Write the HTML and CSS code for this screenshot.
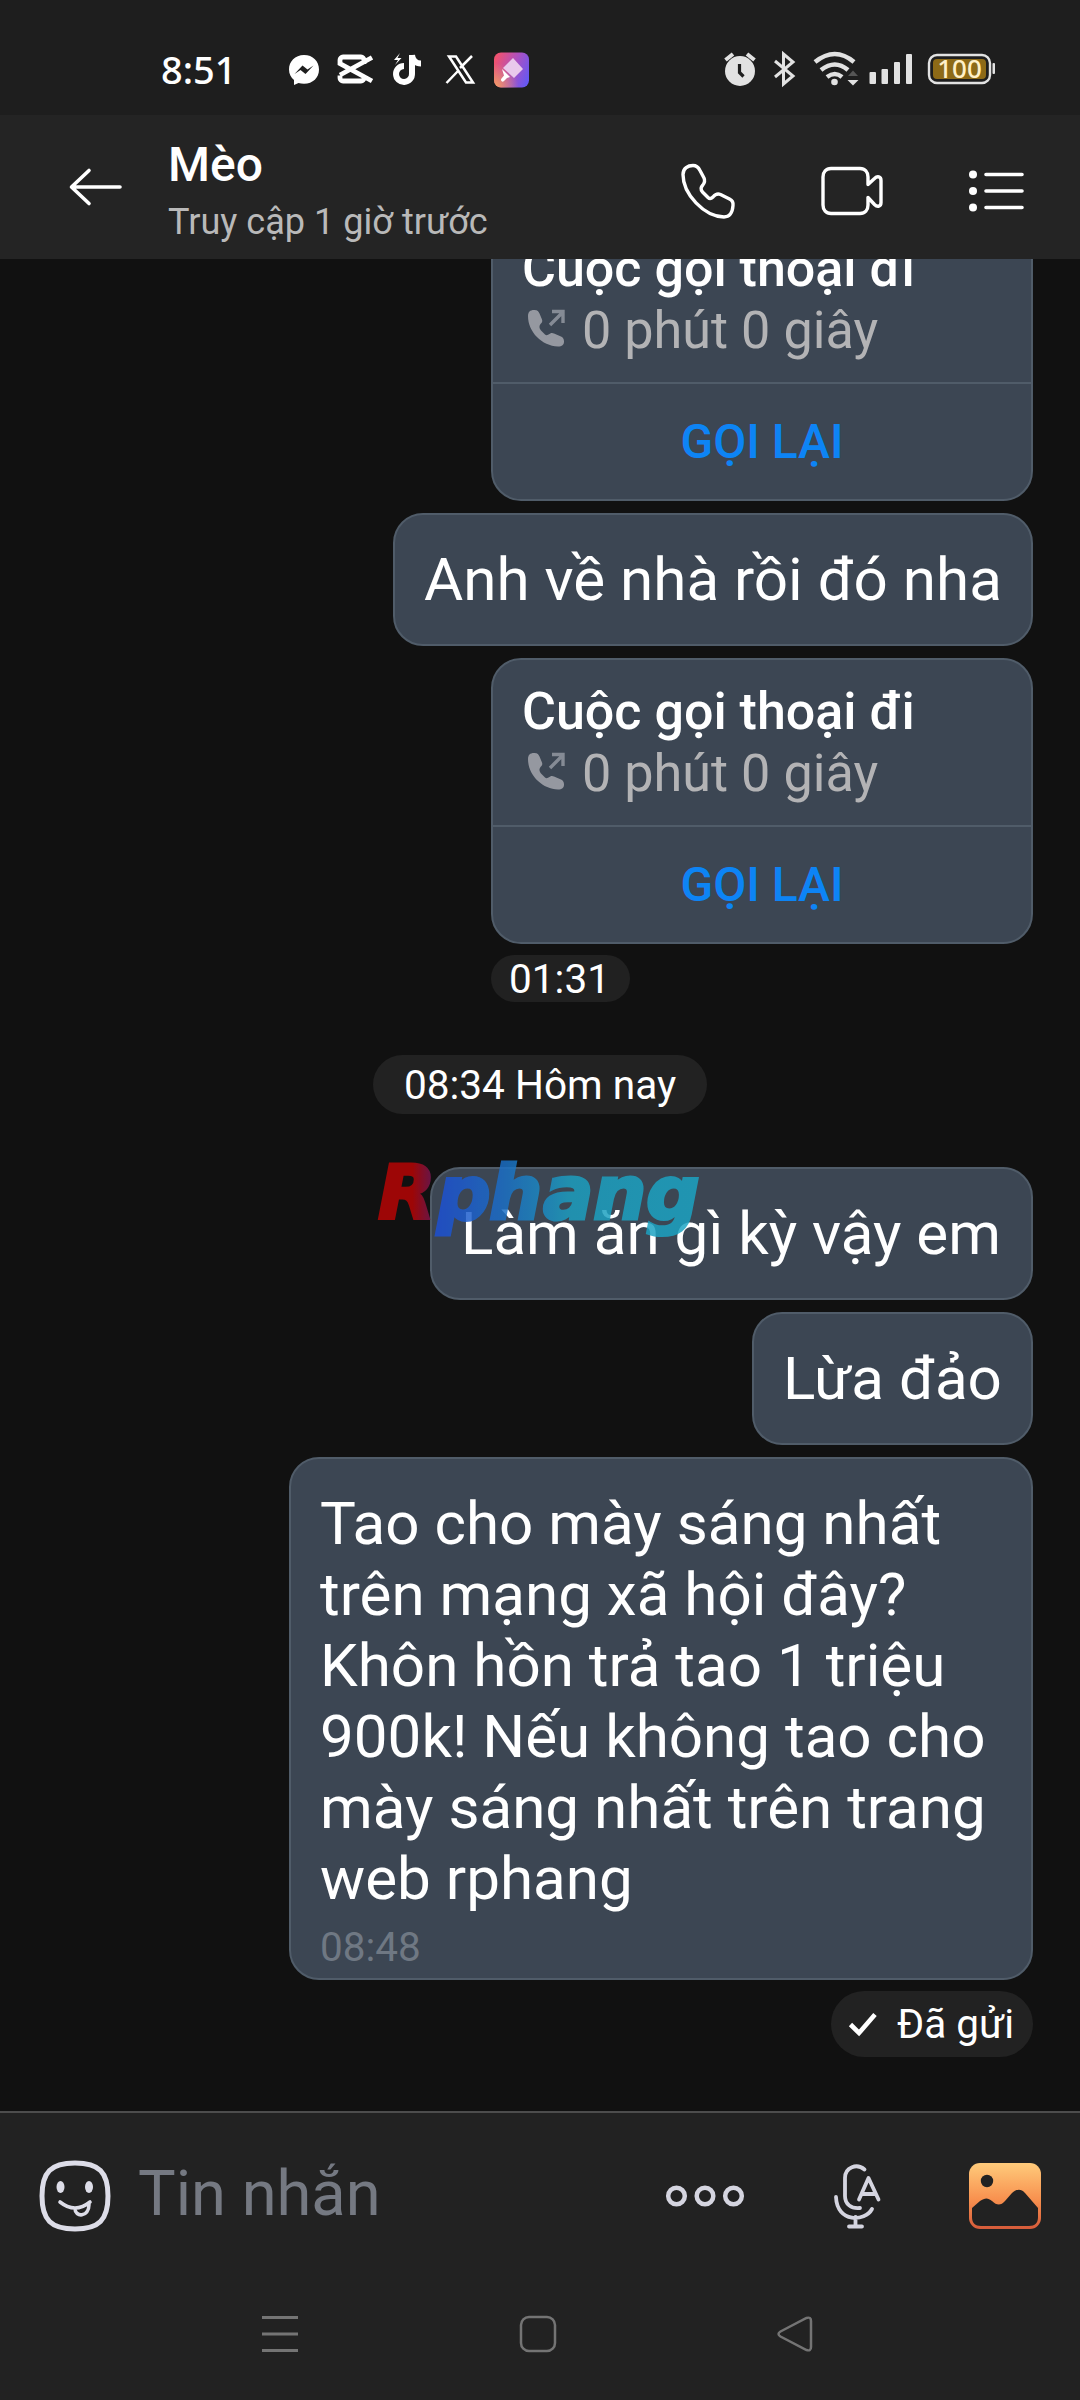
FILE: index.html
```html
<!DOCTYPE html>
<html lang="vi">
<head>
<meta charset="utf-8">
<title>Mèo</title>
<link rel="stylesheet" href="styles.css">
</head>
<body>
<div class="screen">
  <div class="status">
    <span class="clock">8:51</span>
    <svg class="apps" width="242" height="36" viewBox="0 0 242 36">
      <path d="M16 1C7 1 1 7.500 1 15.500c0 4.500 2 8 5 10.500v5l4.500-2c1.700.5 3.500.7 5.500.7 9 0 15-6 15-14.200S25 1 16 1z" fill="#fff"/>
      <path d="M6.500 20l8-8.500 5 4 6-4-8 8.500-5-4z" fill="#1e1e1e"/>
      <path d="M76 10V6a3 3 0 0 0-3-3H55a3 3 0 0 0-3 3v3.500L84 27M52 21.500V24a3 3 0 0 0 3 3h18a3 3 0 0 0 3-3v-2.500M52 21L84 3.500" fill="none" stroke="#fff" stroke-width="4.800"/>
      <path d="M124 1v18.500a8 8 0 1 1-8-7.500M124 1c.5 5 4 8.500 9 8.500" fill="none" stroke="#fff" stroke-width="6"/>
      <path d="M112 -1l-6 7h4l-3 5 6.500-7h-4z" fill="#fff"/>
      <path d="M161 2.500h7L185 28.500h-7zM184 2L172 14M170 17L158.500 29" fill="none" stroke="#fff" stroke-width="2.500"/>
      <defs><linearGradient id="brush" x1="0" y1="0.300" x2="1" y2="0.700"><stop offset="0" stop-color="#f0526f"/><stop offset="0.500" stop-color="#b050bd"/><stop offset="1" stop-color="#6758f2"/></linearGradient>
      <radialGradient id="warm" cx="0" cy="1" r="0.700"><stop offset="0" stop-color="#f6a05f"/><stop offset="1" stop-color="#f6a05f" stop-opacity="0"/></radialGradient></defs>
      <rect x="206" y="-1.500" width="35" height="35" rx="7" fill="url(#brush)"/><rect x="206" y="-1.500" width="35" height="35" rx="7" fill="url(#warm)"/>
      <path d="M225 4l10 11-9 9-11-10z" fill="#e9c9ec"/><path d="M214 15l8 8-3 1-3 3c-2 2-4-1-2.500-2.500l2.500-3z" fill="#fff"/>
    </svg>
    <svg class="sys" width="272" height="40" viewBox="0 0 272 40">
      <circle cx="16" cy="21" r="15" fill="#e2e2e2"/><path d="M15.500 14v8.500l4 4" fill="none" stroke="#1e1e1e" stroke-width="3.200"/>
      <path d="M1.500 10L9 4M30.500 10L23 4" stroke="#e2e2e2" stroke-width="4"/>
      <path d="M51 11l18 15-9.500 8V4L69 12 51 27" fill="none" stroke="#e2e2e2" stroke-width="3"/>
      <path d="M91 12q20-16 39 0M97 20q14-11 27 0M103 27q8-6 15 0" fill="none" stroke="#e2e2e2" stroke-width="4.500"/>
      <circle cx="110.500" cy="32" r="3.300" fill="#e2e2e2"/><path d="M123.500 30h11l-5.500 5.500z" fill="#e2e2e2"/><path d="M124 26h10l-5-5.500z" fill="#555"/>
      <g fill="#e2e2e2"><rect x="145.500" y="22" width="6.500" height="12" rx="1"/><rect x="157.500" y="19" width="6.500" height="15" rx="1"/><rect x="170" y="12" width="6" height="22" rx="1"/><rect x="182" y="4" width="6" height="30" rx="1"/><rect x="268.500" y="13" width="2.500" height="11" rx="1"/></g>
      <rect x="205" y="5" width="61" height="28" rx="8" fill="none" stroke="#e2e2e2" stroke-width="2.400"/><rect x="209" y="9" width="53" height="20" rx="4" fill="#8d6a17"/>
      <text class="level" x="235.500" y="28">100</text>
    </svg>
  </div>

  <header class="header">
    <svg class="back" width="54" height="40" viewBox="0 0 54 40"><path d="M51 20H3M20 3.500L2.500 20 20 36.500" fill="none" stroke="#fff" stroke-width="3.600" stroke-linecap="round" stroke-linejoin="round"/></svg>
    <div class="peer"><div class="name">Mèo</div><div class="seen">Truy cập 1 giờ trước</div></div>
    <div class="actions">
      <svg width="56" height="56" viewBox="0 0 56 56"><path d="M3 11.500C3 5 8 2.500 13 2.500c4 0 5.500 2 7 5l4 7.500c1.500 3 .5 5-1.500 7.500-2 2-2 4 0 6.500l5.500 5.500c1.500 1.500 3 1.500 5-.5 2.500-3 5-3.500 7.500-2.500l9 4.500c3 1.500 4 3 3.500 6.500-.5 7-3 11.500-9 11.500C24 53.500 3 31 3 11.500z" fill="none" stroke="#fff" stroke-width="3.400" stroke-linejoin="round"/></svg>
      <svg width="62" height="50" viewBox="0 0 62 50"><path d="M47 31.500V39c0 5-3 8.500-8 8.500H10c-5 0-8-3.500-8-8.500V11c0-5 3-8.500 8-8.500h29c5 0 8 3.500 8 8.500v7.500l6.500-6c3-3 6.500-2 6.500 2v22c0 4-3.500 5-6.500 2z" fill="none" stroke="#fff" stroke-width="3.400" stroke-linejoin="round"/></svg>
      <svg width="56" height="44" viewBox="0 0 56 44"><g fill="#fff"><circle cx="5" cy="5.500" r="4"/><circle cx="5" cy="22" r="4"/><circle cx="5" cy="38.500" r="4"/></g><path d="M18 5.500h36M18 22h36M18 38.500h36" stroke="#fff" stroke-width="3.600" stroke-linecap="round"/></svg>
    </div>
  </header>

  <main class="chat">
    <section class="call first">
      <div class="call-info"><div class="call-title">Cuộc gọi thoại đi</div>
      <div class="call-sub"><svg width="38" height="40" viewBox="0 0 38 40"><path d="M1 7C1 3 3 1 7 1c3 0 4 .5 5.500 3.500l2.500 6c.7 2 0 3-1.500 4.500-1.500 2-1.500 4 .5 6.500l4 4c1 1 2 1 3.500 0 2-1.500 3.500-2 5.500-1l7 3c2 1 3 2.500 3 5 0 3.500-2 5-6 5C15 37 1 23 1 7z" fill="#9598a0"/><path d="M23 16L35.500 3.500M25 2.500h11V14" fill="none" stroke="#858b95" stroke-width="3.400"/></svg><span>0 phút 0 giây</span></div></div>
      <div class="recall">GỌI LẠI</div>
    </section>
    <div class="bubble home">Anh về nhà rồi đó nha</div>
    <section class="call">
      <div class="call-info"><div class="call-title">Cuộc gọi thoại đi</div>
      <div class="call-sub"><svg width="38" height="40" viewBox="0 0 38 40"><path d="M1 7C1 3 3 1 7 1c3 0 4 .5 5.500 3.500l2.500 6c.7 2 0 3-1.500 4.500-1.500 2-1.500 4 .5 6.500l4 4c1 1 2 1 3.500 0 2-1.500 3.500-2 5.500-1l7 3c2 1 3 2.500 3 5 0 3.500-2 5-6 5C15 37 1 23 1 7z" fill="#9598a0"/><path d="M23 16L35.500 3.500M25 2.500h11V14" fill="none" stroke="#858b95" stroke-width="3.400"/></svg><span>0 phút 0 giây</span></div></div>
      <div class="recall">GỌI LẠI</div>
    </section>
    <div class="time-row"><span class="time">01:31</span></div>
    <div class="date">08:34 Hôm nay</div>
    <div class="branded">
      <div class="bubble work">Làm ăn gì kỳ vậy em</div>
      <svg class="brand" width="340" height="110" viewBox="0 0 340 110">
        <defs>
          <linearGradient id="red" x1="0" x2="1"><stop offset="0.600" stop-color="#b80505"/><stop offset="1" stop-color="#6b1a62"/></linearGradient>
          <linearGradient id="blue" gradientUnits="userSpaceOnUse" x1="66" y1="0" x2="330" y2="0"><stop offset="0" stop-color="#1d50d4"/><stop offset="0.250" stop-color="#1b70c6"/><stop offset="0.500" stop-color="#1c9fc0"/><stop offset="1" stop-color="#1ba5c4"/></linearGradient>
        </defs>
        <text class="logo" x="5" y="79" fill="url(#red)" stroke="url(#red)">R</text>
        <text class="logo" x="64 116 170 220 273" y="79" fill="url(#blue)" stroke="url(#blue)">phang</text>
      </svg>
    </div>
    <div class="bubble scam">Lừa đảo</div>
    <div class="bubble long">Tao cho mày sáng nhất<br>trên mạng xã hội đây?<br>Khôn hồn trả tao 1 triệu<br>900k! Nếu không tao cho<br>mày sáng nhất trên trang<br>web rphang<div class="sent-at">08:48</div></div>
    <div class="sent"><svg width="30" height="26" viewBox="0 0 30 26"><path d="M2.500 13.500l8.500 8.500L27 3.500" fill="none" stroke="#fff" stroke-width="4.600"/></svg><span>Đã gửi</span></div>
  </main>

  <footer class="composer">
    <svg class="smile" width="72" height="72" viewBox="0 0 72 72"><path d="M36 3c24 0 33 9 33 33s-9 33-33 33S3 60 3 36 12 3 36 3z" fill="none" stroke="#dddde8" stroke-width="5"/><g fill="#dddde8"><ellipse cx="21.500" cy="27" rx="4" ry="6"/><ellipse cx="50" cy="27" rx="4" ry="6"/></g><path d="M21 42q15 12 30 0M36 48.500c0 9 14 9 14-4" fill="none" stroke="#dddde8" stroke-width="3.600" stroke-linecap="round"/></svg>
    <span class="hint">Tin nhắn</span>
    <svg class="more" width="80" height="24" viewBox="0 0 80 24"><g fill="none" stroke="#d5d5e0" stroke-width="4.500"><circle cx="11.500" cy="12" r="8.300"/><circle cx="40" cy="12" r="8.300"/><circle cx="68.500" cy="12" r="8.300"/></g></svg>
    <svg class="mic" width="48" height="66" viewBox="0 0 48 66"><path d="M31.500 6.500C24 0 12 4 12 15v18c0 8 6 13 15 12M3 34c1 26 29 25 36 12M22.500 54v9M16 63.500h13M26 36.500L35.500 15 45.500 36.500M29 31h13" fill="none" stroke="#d5d5e0" stroke-width="3.800" stroke-linecap="round" stroke-linejoin="round"/></svg>
    <svg class="photo" width="72" height="68" viewBox="0 0 72 68"><defs><linearGradient id="sun" x1="0" y1="0" x2="0" y2="1"><stop offset="0" stop-color="#ffcb7b"/><stop offset="0.550" stop-color="#f8914f"/><stop offset="1" stop-color="#d65b3a"/></linearGradient></defs><rect y="1" width="72" height="66" rx="11" fill="url(#sun)"/><circle cx="18" cy="19" r="6.200" fill="#222"/><path d="M3 46l8-7c5-3.500 8-3.500 12 0 5 5 9 4.500 13 0l7-8c4.500-4 9-4.500 13 0l13 15v9c0 6-3 9-9 9H12c-6 0-9-3-9-9z" fill="#222"/></svg>
  </footer>
  <nav class="nav">
    <svg width="36" height="40" viewBox="0 0 36 40"><path d="M0 3.500h36M0 20h36M0 36.500h36" stroke="#747474" stroke-width="3"/></svg>
    <svg width="40" height="40" viewBox="0 0 40 40"><rect x="3" y="3" width="34" height="34" rx="8" fill="none" stroke="#747474" stroke-width="2.500"/></svg>
    <svg width="38" height="40" viewBox="0 0 38 40"><path d="M3.500 17.500L29.500 4Q34 2.500 34 7v26q0 4.500-4.500 3L3.500 22.500q-4-2.500 0-5z" fill="none" stroke="#747474" stroke-width="2.500"/></svg>
  </nav>
</div>
</body>
</html>
```
FILE: styles.css
```css
* { box-sizing: border-box; }
body { margin: 0; background: #111; font-family: Roboto, "Noto Sans", sans-serif; color: #fff; }
svg { display: block; flex: none; overflow: visible; }
.screen { width: 1080px; height: 2400px; display: flex; flex-direction: column; overflow: hidden; }

.status { height: 115px; flex: none; background: #1e1e1e; display: flex; align-items: flex-start; padding-top: 49px; }
.clock { width: 127px; margin-left: 161px; font: 500 38px/40px "Noto Sans", sans-serif; white-space: nowrap; }
.apps { margin-top: 5px; }
.sys { margin: 1px 0 0 194px; }
.level { font: 500 26px "Noto Sans", sans-serif; fill: #fff0c8; text-anchor: middle; }

.header { height: 144px; flex: none; background: #242424; display: flex; position: relative; z-index: 1; }
.back { margin: 52px 0 0 69px; }
.peer { margin-left: 45px; padding-top: 22px; width: 400px; }
.name { font-size: 48px; font-weight: 500; line-height: 56px; }
.seen { font-size: 36.1px; line-height: 42px; color: #b9b9b9; margin-top: 8px; white-space: nowrap; }
.actions { display: flex; flex: 1; align-items: center; justify-content: space-between; padding: 8px 56px 0 112px; }

.chat { height: 1852px; flex: none; display: flex; flex-direction: column; align-items: flex-end; gap: 12px; padding-right: 47px; overflow: hidden; }
.call { width: 542px; height: 286px; flex: none; background: #3c4653; border: 2px solid #505c69; border-radius: 30px; }
.first { margin-top: -44px; }
.call-info { height: 167px; padding: 21px 30px 0 29px; border-bottom: 2px solid #505c69; }
.call-title { font-size: 52px; font-weight: 500; line-height: 62px; white-space: nowrap; }
.call-sub { display: flex; gap: 17px; padding-left: 5px; font-size: 52.200px; line-height: 62px; color: #b3b3b5; white-space: nowrap; }
.call-sub svg { margin-top: 9px; }
.recall { height: 114px; line-height: 115px; text-align: center; font-size: 48px; font-weight: 500; color: #0d84f5; }
.bubble { flex: none; height: 133px; background: #3c4653; border: 2px solid #505c69; border-radius: 30px; padding: 28.500px 29px; font-size: 60.150px; line-height: 71px; white-space: nowrap; }
.home { width: 640px; }
.work { width: 603px; }
.scam { width: 281px; }
.long { width: 744px; height: 523px; }
.sent-at { font-size: 40.500px; line-height: 47px; color: #6f7883; margin-top: 10px; }
.time-row { width: 542px; margin-top: -1px; }
.time { display: block; width: 139px; height: 47px; border-radius: 24px; background: #212121; font-size: 40.500px; line-height: 48px; text-align: center; padding-right: 2px; }
.date { width: 334px; height: 59px; margin: 41px 326px 41px 0; border-radius: 30px; background: #222; font-size: 40.600px; line-height: 61px; text-align: center; flex: none; }
.branded { position: relative; }
.brand { position: absolute; left: -57px; top: -27px; opacity: .84; }
.logo { font: italic 700 75px "DejaVu Sans", sans-serif; stroke-width: 3px; }
.sent { width: 202px; height: 66px; margin-top: -1px; flex: none; border-radius: 33px; background: #222; display: flex; align-items: center; justify-content: space-between; padding: 0 19px 0 17px; font-size: 40.500px; }

.composer { height: 169px; flex: none; background: #222; border-top: 2px solid #4d4d4d; display: flex; align-items: flex-start; }
.smile { margin: 47px 0 0 39px; }
.hint { width: 527px; margin-left: 27px; padding-top: 42px; font-size: 63.200px; line-height: 76px; color: #757982; }
.more { margin-top: 71px; }
.mic { margin: 50px 0 0 88px; }
.photo { margin: 49px 0 0 88px; }
.nav { height: 120px; flex: none; background: #222; display: flex; padding: 34px 265px 0 262px; justify-content: space-between; }
```
